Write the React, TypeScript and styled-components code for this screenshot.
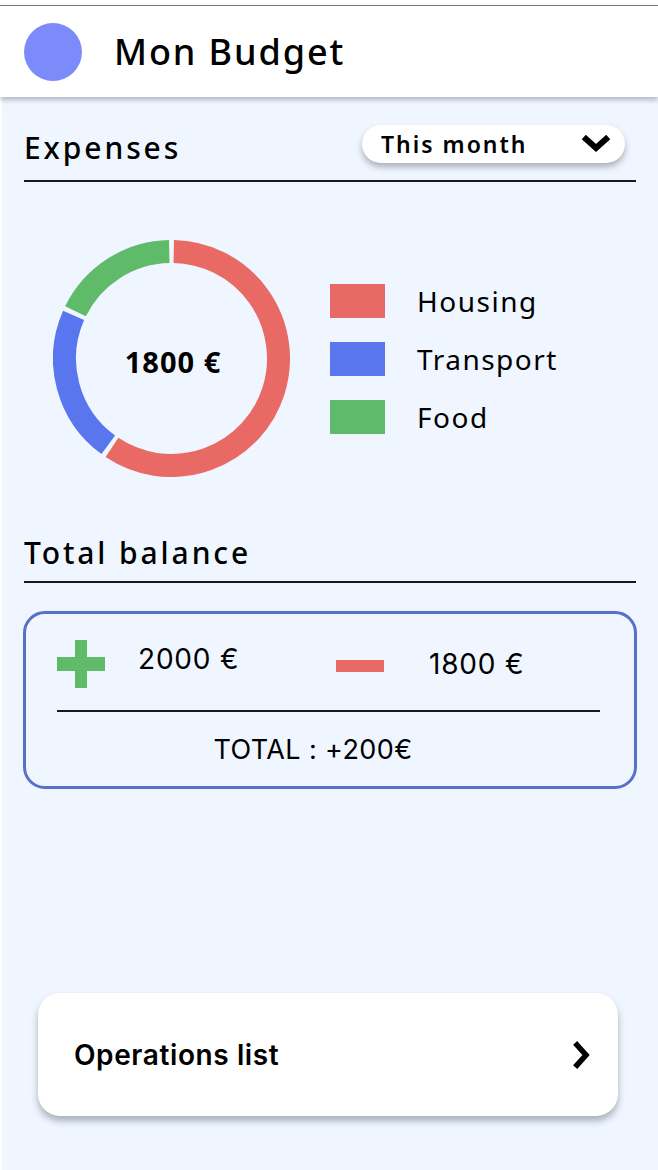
import React from 'react';
import styled, { createGlobalStyle } from 'styled-components';

const GlobalStyle = createGlobalStyle`
  html, body {
    margin: 0;
    padding: 0;
    background: #ffffff;
  }
  * {
    box-sizing: border-box;
  }
`;

const geo = `"Noto Sans", "Open Sans", sans-serif`;
const ui = `Inter, Roboto, sans-serif`;

const segments = [
  { label: 'Housing', color: '#e96a64', from: 0, to: 215 },
  { label: 'Transport', color: '#5a76ee', from: 215, to: 295 },
  { label: 'Food', color: '#5fba6a', from: 295, to: 360 },
];

const Screen = styled.div`
  padding-top: 5px;
  background: #ffffff;
  min-height: 1170px;
  display: flex;
  flex-direction: column;
`;

const Header = styled.header`
  height: 92px;
  border-top: 1px solid #777777;
  background: #ffffff;
  display: flex;
  align-items: center;
  gap: 32px;
  padding-left: 24px;
  position: relative;
  z-index: 1;
  box-shadow: 0 3px 5px rgba(60, 70, 80, 0.35);
`;

const Avatar = styled.div`
  width: 58px;
  height: 58px;
  border-radius: 50%;
  background: #7b8bf9;
`;

const AppTitle = styled.h1`
  margin: 0;
  font-family: ${geo};
  font-size: 36px;
  font-weight: 500;
  letter-spacing: 1.9px;
  color: #000;
`;

const Main = styled.main`
  flex: 1;
  margin-left: 2px;
  background: #eff6ff;
  padding: 28px 22px 0 22px;
  display: flex;
  flex-direction: column;
`;

const SectionHead = styled.div<{ $h: number }>`
  display: flex;
  align-items: flex-start;
  justify-content: space-between;
  height: ${(p) => p.$h}px;
  border-bottom: 2px solid #1a1a1a;
`;

const SectionTitle = styled.h2<{ $top: number }>`
  margin: ${(p) => p.$top}px 0 0 0;
  font-family: ${geo};
  font-size: 30px;
  line-height: 36px;
  font-weight: 500;
  letter-spacing: 2.9px;
  color: #000;
`;

const Dropdown = styled.button`
  width: 263px;
  height: 38px;
  margin-right: 11px;
  border: none;
  border-radius: 19px;
  background: #ffffff;
  box-shadow: 0 4px 6px rgba(40, 50, 60, 0.35);
  display: flex;
  align-items: center;
  justify-content: space-between;
  padding: 0 15px 0 19px;
  font-family: ${geo};
  font-size: 23px;
  font-weight: 600;
  letter-spacing: 2px;
  color: #000;
`;

const ChartRow = styled.div`
  display: flex;
  align-items: center;
  padding: 58px 0 0 29px;
  gap: 40px;
`;

const DonutWrap = styled.div`
  position: relative;
  width: 237px;
  height: 237px;
`;

const DonutLabel = styled.div`
  position: absolute;
  inset: 0;
  display: flex;
  align-items: center;
  justify-content: center;
  padding-left: 3px;
  padding-top: 6px;
  font-family: ${geo};
  font-size: 29px;
  font-weight: 700;
  letter-spacing: 1px;
  color: #000;
`;

const Legend = styled.ul`
  margin: 0;
  padding: 0;
  list-style: none;
  display: flex;
  flex-direction: column;
  gap: 24px;
`;

const LegendItem = styled.li`
  display: flex;
  align-items: center;
  gap: 32px;
  height: 34px;
  font-family: ${geo};
  font-size: 28px;
  line-height: 34px;
  font-weight: 400;
  letter-spacing: 1.5px;
  color: #000;
`;

const Swatch = styled.span<{ $color: string }>`
  width: 55px;
  height: 34px;
  background: ${(p) => p.$color};
`;

const BalanceBlock = styled.div`
  margin-top: 58px;
`;

const BalanceCard = styled.section`
  margin-top: 28px;
  height: 178px;
  border: 3px solid #5671c6;
  border-radius: 22px;
  padding: 26px 31px 0 31px;
  display: flex;
  flex-direction: column;
  margin-left: -1px;
  margin-right: -1px;
`;

const AmountRow = styled.div`
  display: flex;
  align-items: center;
  height: 48px;
  padding-bottom: 22px;
  box-sizing: content-box;
  border-bottom: 2px solid #1a1a1a;
  margin-right: 3px;
`;

const Amount = styled.span<{ $w: number; $dy: number }>`
  font-family: ${ui};
  font-size: 28px;
  font-weight: 400;
  letter-spacing: 0.8px;
  color: #000;
  width: ${(p) => p.$w}px;
  position: relative;
  top: ${(p) => p.$dy}px;
`;

const Plus = styled.span`
  position: relative;
  width: 48px;
  height: 48px;
  margin-right: 33px;
  &::before,
  &::after {
    content: '';
    position: absolute;
    background: #5fba6a;
  }
  &::before {
    left: 18px;
    top: 0;
    width: 12px;
    height: 48px;
  }
  &::after {
    left: 0;
    top: 17px;
    width: 48px;
    height: 14px;
  }
`;

const Minus = styled.span`
  width: 48px;
  height: 12px;
  background: #e96a64;
  margin-right: 45px;
  position: relative;
  top: 2px;
`;

const Total = styled.div`
  text-align: center;
  font-family: ${ui};
  font-size: 27px;
  font-weight: 400;
  letter-spacing: 0.4px;
  color: #000;
  padding-top: 21px;
  padding-right: 34px;
`;

const OpsButton = styled.button`
  margin: 204px 18px 0 14px;
  height: 123px;
  border: none;
  border-radius: 22px;
  background: #ffffff;
  box-shadow: 0 5px 7px rgba(40, 50, 60, 0.35);
  display: flex;
  align-items: center;
  justify-content: space-between;
  padding: 0 26px 0 36px;
  font-family: ${ui};
  font-size: 28px;
  font-weight: 600;
  letter-spacing: 0.6px;
  color: #000;
`;

const Icon = styled.svg`
  display: block;
`;

function arcPath(cx: number, cy: number, r: number, a0: number, a1: number) {
  const rad = (a: number) => ((a - 90) * Math.PI) / 180;
  const x0 = cx + r * Math.cos(rad(a0));
  const y0 = cy + r * Math.sin(rad(a0));
  const x1 = cx + r * Math.cos(rad(a1));
  const y1 = cy + r * Math.sin(rad(a1));
  const large = a1 - a0 > 180 ? 1 : 0;
  return `M ${x0} ${y0} A ${r} ${r} 0 ${large} 1 ${x1} ${y1}`;
}

const Donut = () => (
  <Icon width="237" height="237" viewBox="0 0 237 237">
    {segments.map((s) => (
      <path
        key={s.label}
        d={arcPath(118.5, 118.5, 107, s.from + 1.2, s.to - 1.2)}
        fill="none"
        stroke={s.color}
        strokeWidth="23"
      />
    ))}
  </Icon>
);

const ChevronDown = () => (
  <Icon width="28" height="18" viewBox="0 0 28 18">
    <path d="M4 4 L14 13 L24 4" fill="none" stroke="#000" strokeWidth="6" strokeLinecap="square" />
  </Icon>
);

const ChevronRight = () => (
  <Icon width="20" height="28" viewBox="0 0 20 28">
    <path d="M5 4 L14 14 L5 24" fill="none" stroke="#000" strokeWidth="5.5" strokeLinecap="square" />
  </Icon>
);

export default function App() {
  return (
    <>
      <GlobalStyle />
      <Screen>
        <Header>
          <Avatar />
          <AppTitle>Mon Budget</AppTitle>
        </Header>
        <Main>
          <SectionHead $h={57}>
            <SectionTitle $top={5}>Expenses</SectionTitle>
            <Dropdown>
              This month
              <ChevronDown />
            </Dropdown>
          </SectionHead>

          <ChartRow>
            <DonutWrap>
              <Donut />
              <DonutLabel>1800 €</DonutLabel>
            </DonutWrap>
            <Legend>
              {segments.map((s) => (
                <LegendItem key={s.label}>
                  <Swatch $color={s.color} />
                  {s.label}
                </LegendItem>
              ))}
            </Legend>
          </ChartRow>

          <BalanceBlock>
            <SectionHead $h={48}>
              <SectionTitle $top={0}>Total balance</SectionTitle>
            </SectionHead>
            <BalanceCard>
              <AmountRow>
                <Plus />
                <Amount $w={198} $dy={-5}>2000 €</Amount>
                <Minus />
                <Amount $w={120} $dy={0}>1800 €</Amount>
              </AmountRow>
              <Total>TOTAL : +200€</Total>
            </BalanceCard>
          </BalanceBlock>

          <OpsButton>
            Operations list
            <ChevronRight />
          </OpsButton>
        </Main>
      </Screen>
    </>
  );
}
